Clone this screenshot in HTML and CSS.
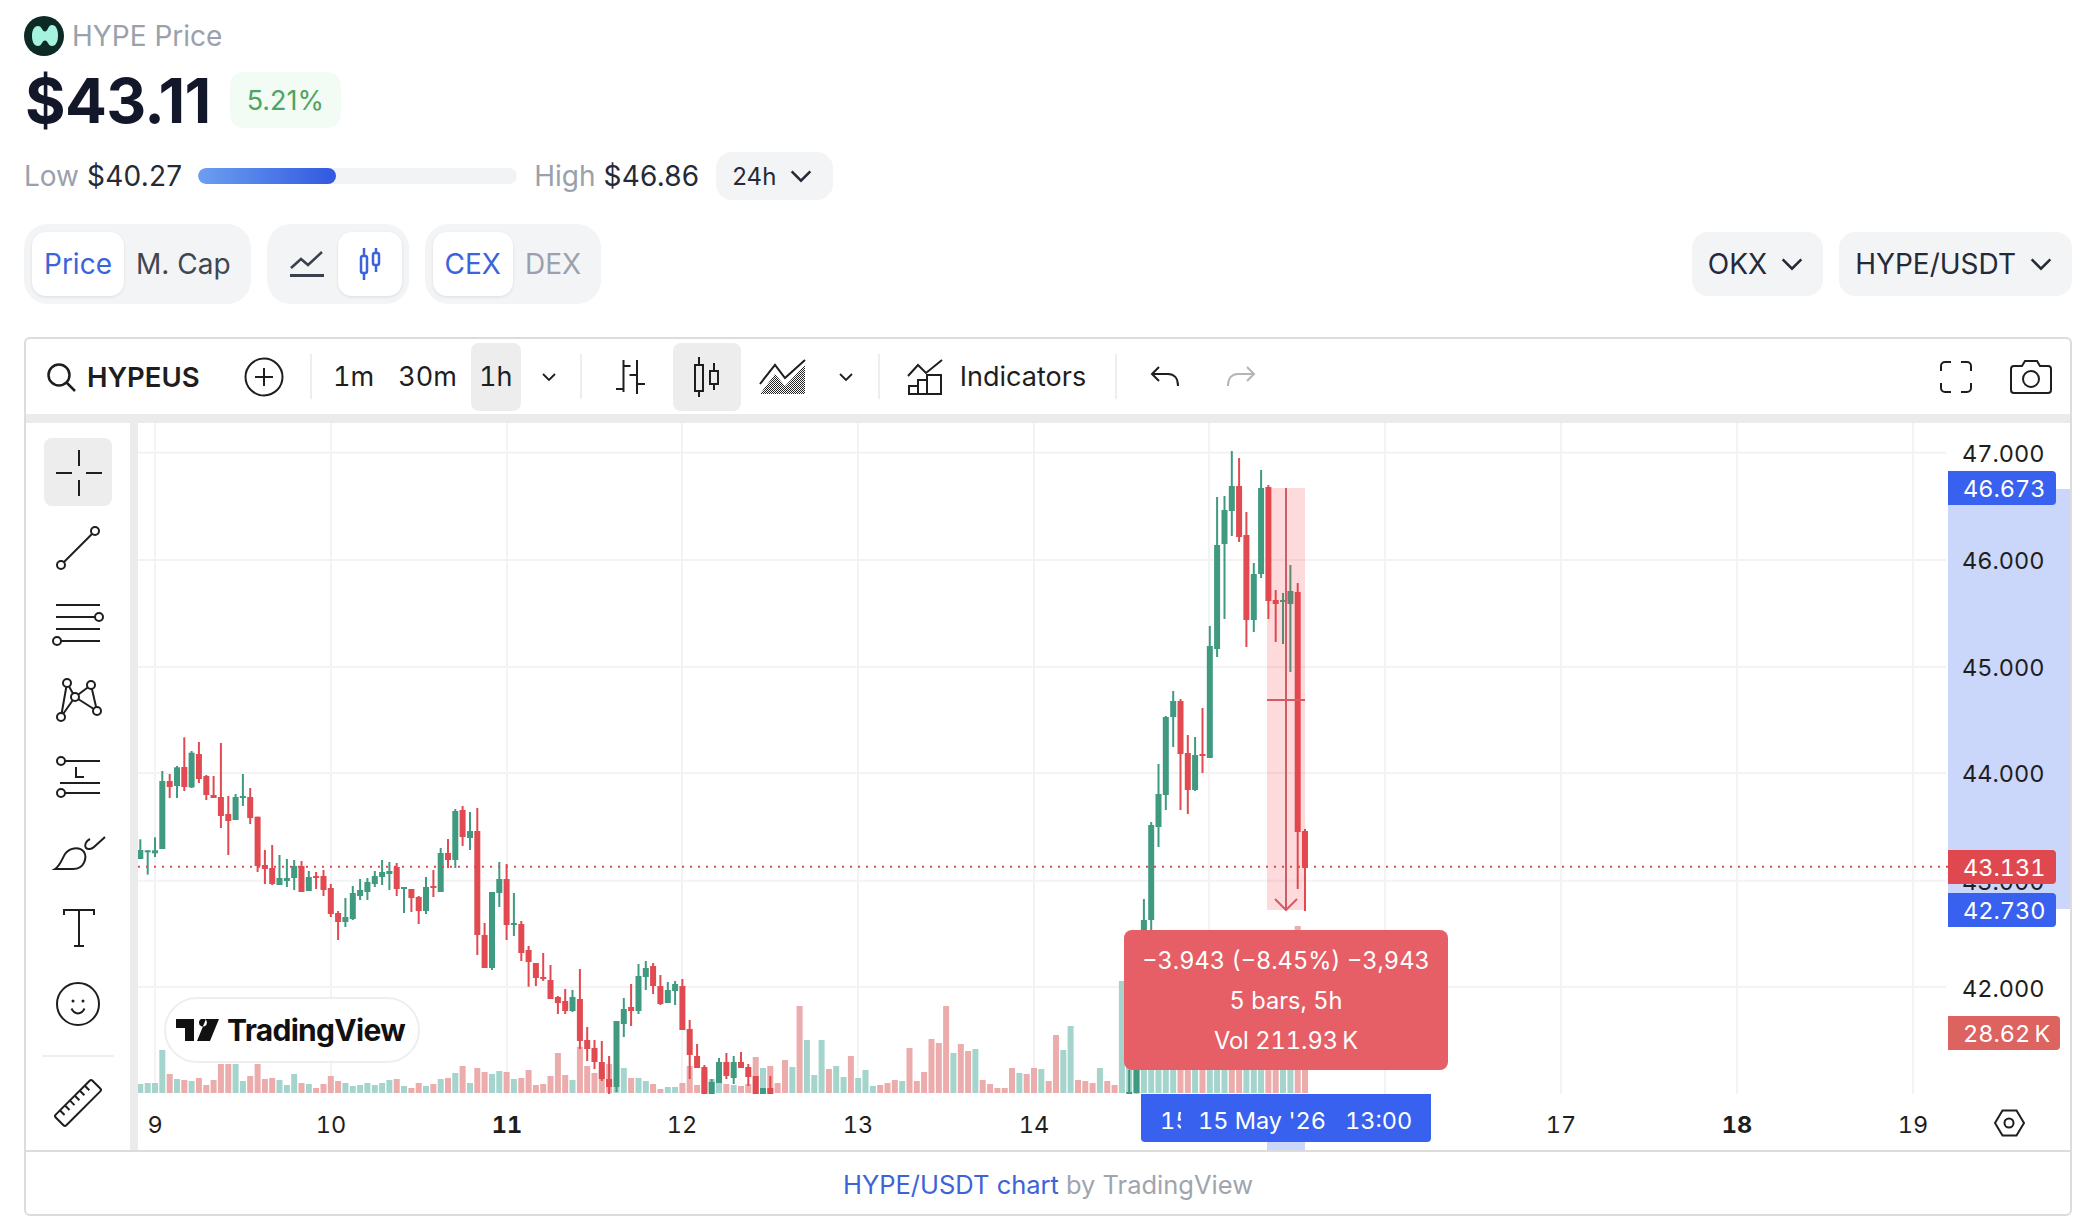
FILE: index.html
```html
<!DOCTYPE html>
<html lang="en">
<head>
<meta charset="utf-8">
<title>HYPE Price</title>
<link rel="stylesheet" href="styles.css">
</head>
<body>
<main class="page">
  <div class="title">
    <svg class="logo" viewBox="0 0 40 40"><circle cx="20" cy="20" r="20" fill="#0d2a25"/><path fill="#a5f3de" d="M8 20C8 13 11 10 14 10C18 10 18 15.500 21 15.500C24 15.500 24 9 28 9C32 9 34 14 34 19.500C34 25 32 30 28 30C24 30 24 24.500 21 24.500C18 24.500 18 30 14 30C11 30 8 27 8 20z"/></svg>
    <span>HYPE Price</span>
  </div>
  <div class="price-row">
    <span class="price">$43.11</span>
    <span class="badge">5.21%</span>
  </div>
  <div class="range-row">
    <span class="muted">Low</span><span class="val">$40.27</span>
    <div class="range-bar"><div class="range-fill"></div></div>
    <span class="muted">High</span><span class="val">$46.86</span>
    <button class="chip chip-sm">24h
      <svg class="chev" viewBox="0 0 20 12"><path d="M2 2l8 8 8-8"/></svg>
    </button>
  </div>
  <div class="controls">
    <div class="groups">
      <div class="seg">
        <span class="seg-item on">Price</span><span class="seg-item">M. Cap</span>
      </div>
      <div class="seg seg-icons">
        <span class="seg-icon">
          <svg width="34" height="28" viewBox="0 0 34 28" class="ic-dark"><path d="M1 18l10-9 7 6L32 2"/><path d="M0 25.500h34" stroke-width="3"/></svg>
        </span>
        <span class="seg-icon on">
          <svg width="24" height="32" viewBox="0 0 24 32" class="ic-blue"><path d="M6 0v8M6 25v7M18 0v5M18 17v7"/><rect x="3" y="8" width="6" height="17" rx="2"/><rect x="15" y="5" width="6" height="12" rx="2"/></svg>
        </span>
      </div>
      <div class="seg">
        <span class="seg-item on">CEX</span><span class="seg-item dim">DEX</span>
      </div>
    </div>
    <div class="selects">
      <button class="chip">OKX
        <svg class="chev" viewBox="0 0 20 12"><path d="M2 2l8 8 8-8"/></svg>
      </button>
      <button class="chip">HYPE/USDT
        <svg class="chev" viewBox="0 0 20 12"><path d="M2 2l8 8 8-8"/></svg>
      </button>
    </div>
  </div>

  <section class="chart">
    <div class="toolbar">
      <svg class="tb-search" width="30" height="30" viewBox="0 0 30 30"><circle cx="13" cy="13" r="10.500"/><path d="M20.500 20.500L29 29"/></svg>
      <strong class="symbol">HYPEUS</strong>
      <svg class="tb-plus" width="40" height="40" viewBox="0 0 40 40"><circle cx="20" cy="20" r="18.500"/><path d="M20 11v18M11 20h18"/></svg>
      <i class="tb-sep sep-a"></i>
      <span class="tf">1m</span>
      <span class="tf">30m</span>
      <span class="tf tf-on">1h</span>
      <svg class="tb-chev" viewBox="0 0 14 8"><path d="M1 1l6 6 6-6"/></svg>
      <i class="tb-sep sep-b"></i>
      <svg class="tb-bars" width="30" height="36" viewBox="0 0 30 36"><path d="M8.500 1v32M8.500 7h7M1 30h7.500M22 1v34M14.500 16h7.500M22 25h8"/></svg>
      <span class="tb-candle">
        <svg width="28" height="40" viewBox="0 0 28 40"><path d="M6 0v8M6 34v6M21 6v8M21 27v6"/><rect x="2" y="8" width="8" height="26"/><rect x="17" y="14" width="8" height="13"/></svg>
      </span>
      <svg class="tb-area" width="48" height="36" viewBox="0 0 48 36">
        <defs><pattern id="dots" width="2" height="2" patternUnits="userSpaceOnUse"><rect width="1" height="1" fill="#222" stroke="none"/><rect x="1" y="1" width="1" height="1" fill="#222" stroke="none"/></pattern></defs>
        <path fill="url(#dots)" stroke="none" d="M1 35L16 15l10 12L46 6v29z"/>
        <path d="M1 25L16 6l10 13L46 1" stroke-width="2"/>
      </svg>
      <svg class="tb-chev" viewBox="0 0 14 8"><path d="M1 1l6 6 6-6"/></svg>
      <i class="tb-sep sep-c"></i>
      <svg class="tb-ind" width="36" height="36" viewBox="0 0 36 36"><path d="M1 17L11 6l8 8L35 1"/><path d="M1 35h34M2 35V27h9v8M11 35V21h9v14M20 35V16h14v19"/></svg>
      <span class="ind-label">Indicators</span>
      <i class="tb-sep sep-d"></i>
      <svg class="tb-undo" width="30" height="22" viewBox="0 0 30 22"><path d="M9 1L2 8l7 7M2 8h16c6 0 10 4 10 12"/></svg>
      <svg class="tb-redo" width="30" height="22" viewBox="0 0 30 22"><path d="M21 1l7 7-7 7M28 8H12C6 8 2 12 2 20"/></svg>
      <span class="tb-spacer"></span>
      <svg class="tb-full" width="32" height="32" viewBox="0 0 32 32"><path d="M1 10V5a4 4 0 0 1 4-4h6M21 1h6a4 4 0 0 1 4 4v5M31 22v5a4 4 0 0 1-4 4h-6M11 31H5a4 4 0 0 1-4-4v-5"/></svg>
      <svg class="tb-cam" width="42" height="34" viewBox="0 0 42 34"><path d="M4 6h8l3-5h12l3 5h8a3 3 0 0 1 3 3v21a3 3 0 0 1-3 3H4a3 3 0 0 1-3-3V9a3 3 0 0 1 3-3z"/><circle cx="21" cy="19" r="8"/></svg>
    </div>
    <div class="chart-body">
      <nav class="tools">
        <button class="tool tool-on"><svg viewBox="0 0 68 68"><path d="M35 12v16M35 42v16M12 35h16M42 35h16"/></svg></button>
        <button class="tool"><svg viewBox="0 0 68 68"><path d="M20 48L48 20"/><circle cx="17" cy="51" r="4"/><circle cx="51" cy="17" r="4"/></svg></button>
        <button class="tool"><svg viewBox="0 0 68 68"><path d="M12 15h44M12 27h39M12 39h44M17 51h39"/><circle cx="55" cy="27" r="4"/><circle cx="13" cy="51" r="4"/></svg></button>
        <button class="tool"><svg viewBox="0 0 68 68"><path d="M23 17L17 51M23 17l8 14M31 31L17 51M31 31l16-12M31 31l22 14M47 19l6 26"/><circle cx="23" cy="17" r="4"/><circle cx="47" cy="19" r="4"/><circle cx="31" cy="31" r="4"/><circle cx="53" cy="45" r="4"/><circle cx="17" cy="51" r="4"/></svg></button>
        <button class="tool"><svg viewBox="0 0 68 68"><path d="M21 19h35M16 41h40M21 51h35M32 25v10h8"/><circle cx="17" cy="19" r="4"/><circle cx="17" cy="51" r="4"/></svg></button>
        <button class="tool"><svg viewBox="0 0 68 68"><path d="M11 51c5-3 7-10 10-15 4-6 14-8 19-2 3 5 1 17-11 17H11zM46 21c-4 2-6 6-4 9 2 2 6 1 8-1l11-10"/></svg></button>
        <button class="tool"><svg viewBox="0 0 68 68"><path d="M20 21v-5h30v5M35 16v36M30 52h10"/></svg></button>
        <button class="tool"><svg viewBox="0 0 68 68"><circle cx="34" cy="34" r="21"/><path d="M27.500 38.500c3 6.500 10 6.500 13 0"/><circle class="solid" cx="29" cy="31" r="1.500"/><circle class="solid" cx="39" cy="31" r="1.500"/></svg></button>
        <hr class="tools-sep">
        <button class="tool"><svg viewBox="0 0 68 68"><g transform="rotate(-45 34 34)"><rect x="8" y="26.500" width="52" height="15" rx="2"/><path d="M16 27v6M23 27v6M30 27v6M37 27v6M44 27v6M51 27v6"/></g></svg></button>
      </nav>
      <div class="pane">
        <svg id="plot" class="plot" width="1932" height="727" viewBox="138 423 1932 727"></svg>
        <div class="tv-pill">
          <svg width="43" height="22" viewBox="0 0 43 22"><path fill="#111" d="M0 0h18v22H9V9H0zM30 0h13l-9 22H21zM25 7a4 4 0 1 0 0-7 4 4 0 0 0 0 7z"/></svg>
          <span>TradingView</span>
        </div>
        <div class="tag tag-blue tag-top">46.673</div>
        <div class="tag tag-red tag-last">43.131</div>
        <div class="tag tag-blue tag-low">42.730</div>
        <div class="tag tag-vol">28.62&#8201;K</div>
        <div class="measure">
          <div>−3.943 (−8.45%) −3,943</div>
          <div>5 bars, 5h</div>
          <div>Vol 211.93&#8201;K</div>
        </div>
        <div class="time-tag"><span class="time-clip">15</span><span class="time-date">15 May '26</span><span>13:00</span></div>
      </div>
    </div>
  </section>
  <footer class="attrib"><a>HYPE/USDT chart</a> by TradingView</footer>
</main>
<script src="chart.js"></script>
</body>
</html>
```

FILE: styles.css
```css
* { box-sizing: border-box; }
html, body { margin: 0; background: #fff; }
body { font-family: Inter, "Liberation Sans", sans-serif; color: #1a1f2b; }
button { font: inherit; color: inherit; border: 0; background: none; padding: 0; }

.page { width: 2086px; height: 1230px; padding: 16px 14px 0 24px; }

.title { display: flex; align-items: center; gap: 8px; height: 40px; font-size: 28px; color: #9aa1ac; }
.logo { width: 40px; height: 40px; }

.price-row { display: flex; align-items: center; gap: 19px; margin-top: 16px; height: 56px; }
.price { font-size: 62px; font-weight: 700; letter-spacing: -.7px; color: #12182a; margin-left: 1px; }
.badge { display: flex; align-items: center; height: 56px; padding: 0 17px; border-radius: 14px; background: #f2fbf4; color: #4da560; font-size: 27px; }

.range-row { display: flex; align-items: center; height: 48px; margin-top: 24px; font-size: 28px; }
.muted { color: #9aa1ac; margin-right: 8px; }
.val { color: #252a36; letter-spacing: .2px; }
.range-bar { width: 319px; height: 16px; margin: 0 17px 0 16px; border-radius: 8px; background: #f1f3f5; overflow: hidden; }
.range-fill { width: 138px; height: 100%; border-radius: 8px; background: linear-gradient(90deg, #6d9ff0, #3158e0); }
.chip { display: flex; align-items: center; gap: 13px; height: 64px; padding: 0 19px 0 16px; border-radius: 16px; background: #f2f4f6; font-size: 28px; color: #252a36; }
.chip-sm { height: 48px; font-size: 24px; margin-left: 17px; padding-right: 20px; }
.chev { width: 24px; height: 14px; fill: none; stroke: #252a36; stroke-width: 2.2; }

.controls { display: flex; justify-content: space-between; align-items: center; height: 80px; margin-top: 24px; }
.groups { display: flex; gap: 16px; }
.selects { display: flex; gap: 16px; }
.seg { display: flex; height: 80px; padding: 8px; border-radius: 24px; background: #f2f4f6; font-size: 28px; }
.seg-item { display: flex; align-items: center; padding: 0 12px; border-radius: 14px; color: #40464f; }
.seg-item.on { background: #fff; color: #3b63dc; box-shadow: 0 1px 3px rgba(20,30,50,.1); }
.seg-item.dim { color: #9aa1ac; }
.seg-icons { gap: 14px; padding: 8px 7px 8px 23px; }
.seg-icon { display: flex; align-items: center; justify-content: center; width: 64px; border-radius: 14px; }
.seg-icons .seg-icon:first-child { width: 34px; }
.seg-icon.on { background: #fff; box-shadow: 0 1px 3px rgba(20,30,50,.1); }
.ic-dark { fill: none; stroke: #3a404d; stroke-width: 2.5; }
.ic-blue { fill: none; stroke: #3b63dc; stroke-width: 2.5; }

.chart { height: 815px; margin-top: 33px; border: 2px solid #dcdcdc; border-radius: 6px 6px 0 0; overflow: hidden; }
.toolbar { display: flex; align-items: center; height: 84px; padding: 0 18px 0 20px; border-bottom: 9px solid #ebebeb; font-size: 27px; color: #1e1e1e; font-variant-numeric: tabular-nums; }
.toolbar svg { fill: none; stroke: #1e1e1e; stroke-width: 2; flex: none; }
.toolbar .tb-search { stroke-width: 2.5; margin-right: 11px; }
.symbol { font-weight: 600; font-size: 27.5px; width: 113px; }
.tb-plus { margin-left: 44px; }
.tb-sep { width: 2px; height: 45px; background: #eeeeee; flex: none; }
.sep-a { margin: 0 20px 0 26px; }
.sep-b { margin: 0 33px 0 24px; }
.sep-c { margin: 0 27px 0 25px; }
.sep-d { margin: 0 33px 0 29px; }
.tf { display: flex; align-items: center; height: 68px; padding: 0 1px; margin-right: 22px; }
.tf-on { width: 50px; justify-content: center; background: #ededed; border-radius: 8px; margin-left: -9px; margin-right: 21px; }
.toolbar .tb-chev { width: 14px; height: 8px; stroke-width: 1.8; }
.tb-candle { display: flex; align-items: center; justify-content: center; width: 68px; height: 68px; margin: 0 18px 0 28px; border-radius: 8px; background: #ededed; }
.tb-area { margin-right: 32px; }
.ind-label { margin-left: 17px; white-space: nowrap; }
.toolbar .tb-redo { margin-left: 46px; stroke: #b4b4b4; }
.tb-spacer { flex: 1; }
.tb-full { margin-right: 38px; }

.chart-body { display: flex; height: 727px; }
.tools { flex: none; display: flex; flex-direction: column; gap: 8px; width: 112px; padding: 15px 0 0 18px; border-right: 8px solid #ebebeb; }
.tool { display: block; flex: none; width: 68px; height: 68px; border-radius: 8px; }
.tool svg { display: block; width: 68px; height: 68px; fill: none; stroke: #1e1e1e; stroke-width: 2; }
.tool circle { fill: #fff; }
.tool circle.solid { fill: #1e1e1e; stroke: none; }
.tool-on { background: #ededed; }
.tools-sep { width: 72px; height: 2px; margin: 9px 0 4px -2px; border: 0; background: #eeeeee; }

.pane { position: relative; flex: 1; overflow: hidden; font-variant-numeric: tabular-nums; }
.plot { display: block; font-family: Inter, "Liberation Sans", sans-serif; }
.grid { stroke: #f3f3f3; stroke-width: 2; }
.vol-up { fill: #a4d4cc; }
.vol-down { fill: #ecacac; }
.up { fill: #3f9a80; }
.down { fill: #e04a50; }
.last-line { stroke: #e0484f; stroke-width: 2; stroke-dasharray: 2 6; }
.sel-area { fill: rgba(242,54,69,.18); }
.sel-line { fill: none; stroke: #d25c65; stroke-width: 2; }
.axis-hl { fill: #cad7fb; }
.axis-text { font-size: 23.5px; fill: #1e1e1e; }
.axis-text.bold { font-weight: 700; }
.hex { fill: none; stroke: #1e1e1e; stroke-width: 2; }

.tv-pill { position: absolute; left: 26px; top: 574px; display: flex; align-items: center; gap: 8px; width: 256px; height: 66px; padding-left: 10px; border: 2px solid #eeeeee; border-radius: 33px; background: #fff; }
.tv-pill span { font-size: 30px; font-weight: 700; letter-spacing: -.7px; color: #111; }
.tag { position: absolute; left: 1810px; width: 108px; height: 34px; padding: 1px 0 0 15px; border-radius: 0 4px 4px 0; color: #fff; font-size: 23.5px; line-height: 34px; white-space: nowrap; }
.tag-blue { background: #3861ef; }
.tag-red { background: #e0484f; }
.tag-top { top: 48px; }
.tag-last { top: 427px; }
.tag-low { top: 470px; }
.tag-vol { top: 593px; width: 112px; background: #dd6360; }
.measure { position: absolute; left: 986px; top: 507px; display: flex; flex-direction: column; justify-content: center; width: 324px; height: 140px; padding-top: 2px; border-radius: 8px; background: #e65f66; color: #fff; font-size: 23.6px; line-height: 40px; text-align: center; }
.time-tag { position: absolute; left: 1003px; top: 671px; display: flex; align-items: center; width: 290px; height: 48px; padding: 5px 0 0 19px; border-radius: 0 0 4px 4px; background: #3861ef; color: #fff; font-size: 23.5px; white-space: nowrap; }
.time-clip { width: 21px; overflow: hidden; margin-right: 17px; }
.time-date { margin-right: 19px; }

.attrib { display: flex; justify-content: center; align-items: center; gap: 7px; height: 64px; padding-top: 2px; border: 2px solid #dcdcdc; border-top: 0; border-radius: 0 0 6px 6px; color: #a0a5ad; font-size: 25.5px; }
.attrib a { color: #3d63d8; }
```

FILE: chart.js
```js
// Pixel-space series read off the chart: [colour, wickTop, bodyTop, bodyBottom, wickBottom]
// in units of 1/3 px, relative to a base y for each segment.
var g = 'up', r = 'down';
var segments = [
  { from: 0, base: 710, rows: [
    [g,388,420,447,447],[g,421,421,425,494],[g,382,421,430,441],[g,183,213,417,417],[r,192,213,231,264],
    [g,168,172,228,264],[r,82,171,231,243],[g,123,128,232,234],[r,96,132,207,219],[r,195,198,255,270],
    [r,198,255,264,264],[r,99,261,318,354],[r,258,312,333,435],[g,252,261,330,330],[g,192,258,264,288],
    [r,234,261,324,342],[r,320,320,468,486],[r,420,465,477,522],[r,405,474,522,525],[g,435,504,525,525],
    [g,447,504,513,531],[g,450,468,504,540],[r,453,468,546,546],[g,483,501,543,543],[r,486,498,504,537],
    [r,480,498,540,558],[r,522,534,612,621],[r,603,609,636,690],[g,564,621,636,651],[g,528,549,627,630],
    [g,507,540,558,570],[g,504,516,546,570],[g,483,498,522,531],[g,450,486,501,525],[g,456,483,492,540],
    [r,459,471,537,558],[g,531,531,537,609],[r,537,537,564,606],[r,558,561,603,642],[g,501,531,603,612],
    [r,480,528,534,561],[g,414,429,546,546],[r,387,429,450,474],[g,297,303,450,474],[r,288,300,381,408],
    [g,306,363,384,420],[r,294,363,675,735],[r,639,675,774,774],[g,546,546,774,780],[g,456,507,549,591],
    [r,462,507,645,690],[g,549,639,645,678],[r,633,642,729,753],[r,708,720,756,830]
  ]},
  { from: 54, base: 780, rows: [
    [r,549,549,594,618],[r,519,591,597,603],[r,555,600,657,657],[r,648,651,669,702],[r,627,663,693,702],
    [g,630,651,693,696],[r,567,657,783,807],[r,741,780,807,843],[r,780,804,846,867],[r,783,846,897,903],
    [r,828,897,921,942],[g,723,723,921,936],[g,654,687,732,771],[r,612,681,693,738],[g,552,588,693,702],
    [g,543,564,591,630],[r,549,558,618,642],[r,585,618,672,675],[g,606,630,669,669],[g,603,612,633,675],
    [r,597,618,750,750],[r,720,747,825,897],[r,792,828,864,864],[r,855,861,942,942],[g,897,906,942,942],
    [g,834,846,909,909],[r,819,846,888,897],[g,828,846,894,912],[r,816,846,864,864],[r,852,861,891,918],
    [r,888,888,942,942],[g,924,924,942,942],[r,888,924,942,942]
  ]},
  { from: 135, base: 880, rows: [[g,570,636,640,640],[g,570,570,640,640]] },
  { from: 137, base: 430, rows: [
    [g,1407,1470,1700,1800],[g,1176,1185,1470,1500],[g,1002,1092,1191,1251],[g,858,861,1095,1140],[g,783,813,861,951],
    [r,807,813,972,1140],[r,915,969,1080,1152],[g,921,975,1080,1083],[r,834,972,978,1029],[g,588,648,984,984],
    [g,201,345,657,681],[g,198,240,342,567],[g,63,168,243,318],[r,84,168,321,336],[r,246,315,570,651],
    [g,399,432,570,606],[g,120,174,432,444],[r,165,171,513,567],[r,480,510,522,636],[g,489,510,516,642],
    [g,405,483,522,726],[r,459,486,1206,1377],[r,1197,1203,1314,1443]
  ]}
];
// Volume tops, same 1/3 px units.
var volumes = [
  { from: 0, base: 710, rows: [
    [g,1122],[g,1119],[g,1119],[g,1020],[r,1092],[g,1107],[r,1110],[g,1113],[r,1104],[r,1125],[r,1110],[r,1062],
    [r,1062],[g,1062],[g,1113],[r,1098],[r,1062],[r,1107],[r,1104],[g,1110],[g,1125],[g,1092],[r,1119],[g,1122],
    [r,1134],[r,1122],[r,1098],[r,1113],[g,1119],[g,1128],[g,1125],[g,1119],[g,1125],[g,1119],[g,1110],[r,1107],
    [g,1128],[r,1134],[r,1119],[g,1128],[r,1122],[g,1107],[r,1104],[g,1089],[r,1068],[g,1119],[r,1074],[r,1086],
    [g,1092],[g,1083],[r,1086],[g,1107],[r,1104],[r,1080]
  ]},
  { from: 54, base: 780, rows: [
    [r,915],[r,912],[r,888],[r,819],[r,885],[g,900],[r,800],[r,858],[r,879],[r,870],[r,852],[g,920],[g,864],[r,894],
    [g,894],[g,903],[r,912],[r,927],[g,921],[g,921],[r,909],[r,858],[r,915],[r,870],[g,897],[g,909],[r,912],[g,915],
    [r,918],[r,912],[r,831],[g,864],[r,858],[r,909],[r,840],[g,861],[r,678],[g,780],[g,885],[g,780],[r,867],[g,858],
    [g,891],[r,828],[g,894],[g,870],[g,918],[r,915],[r,909],[r,900],[g,903],[r,804],[r,903],[r,876],[r,777],[r,789],
    [r,678],[g,819],[r,792],[r,813],[g,807],[r,900],[r,912],[r,924],[r,924],[r,864],[g,879],[r,882],[r,864],[g,867],
    [r,903],[r,765],[g,810],[g,738],[r,900],[r,903],[r,909],[g,864],[r,903],[r,915]
  ]},
  { from: 134, base: 880, rows: [
    [g,303],[g,420],[g,420],[g,420],[g,420],[g,420],[g,420],[g,420],[r,420],[r,420],[g,420],[r,420],[g,420],
    [g,420],[g,420],[r,420],[r,420],[g,420],[g,420],[g,420],[r,420],[r,420],[g,420],[g,420],[r,138],[r,420]
  ]}
];

var out = [];
var X0 = 140.35, STEP = 7.325, BASE = 1093, CLIP = 1094;
function xOf(i) { return X0 + STEP * i; }
function rect(cls, x, y, w, h) {
  if (h <= 0) return;
  out.push('<rect class="' + cls + '" x="' + x.toFixed(1) + '" y="' + y.toFixed(1) + '" width="' + w + '" height="' + h.toFixed(1) + '"/>');
}
function line(cls, x1, y1, x2, y2) {
  out.push('<line class="' + cls + '" x1="' + x1 + '" y1="' + y1 + '" x2="' + x2 + '" y2="' + y2 + '"/>');
}
function text(cls, x, y, anchor, s) {
  out.push('<text class="' + cls + '" x="' + x + '" y="' + y + '" text-anchor="' + anchor + '">' + s + '</text>');
}

// grid
[155, 331, 507, 682, 858, 1034, 1209, 1385, 1561, 1737, 1913].forEach(function (x) { line('grid', x, 423, x, CLIP); });
[452.7, 560, 667, 773, 880.7, 987].forEach(function (y) { line('grid', 138, y, 1946, y); });

// volume
volumes.forEach(function (s) {
  s.rows.forEach(function (v, k) {
    var top = s.base + v[1] / 3;
    rect(v[0] === g ? 'vol-up' : 'vol-down', xOf(s.from + k) - 3, top, 6, BASE - top);
  });
});

// candles, clipped at the bottom of the price pane
segments.forEach(function (s) {
  s.rows.forEach(function (c, k) {
    var x = xOf(s.from + k), cy = function (v) { return Math.min(s.base + v / 3, CLIP); };
    rect(c[0], x - 1, cy(c[1]), 2, cy(c[4]) - cy(c[1]));
    rect(c[0], x - 3, cy(c[2]), 6, Math.max(cy(c[3]) - cy(c[2]), 2));
  });
});

line('last-line', 138, 866.7, 1948, 866.7);

// measure selection
rect('sel-area', 1267, 488, 38, 422);
line('sel-line', 1267, 700, 1305, 700);
line('sel-line', 1286, 488, 1286, 910);
out.push('<path class="sel-line" d="M1275 899l11 11 11-11"/>');

// axes
rect('axis-hl', 1948, 489, 122, 420);
rect('axis-hl', 1267, 1142, 38, 8);
[['47.000', 453], ['46.000', 560], ['45.000', 667], ['44.000', 773], ['43.000', 881], ['42.000', 988]].forEach(function (p) {
  text('axis-text', 1962, p[1] + 9, 'start', p[0]);
});
[['9', 155], ['10', 331], ['11', 507, 1], ['12', 682], ['13', 858], ['14', 1034], ['17', 1561], ['18', 1737, 1], ['19', 1913]].forEach(function (d) {
  text('axis-text' + (d[2] ? ' bold' : ''), d[1], 1133, 'middle', d[0]);
});
out.push('<path class="hex" d="M1995 1123l7.500-12.500h14l7.500 12.500-7.500 12.500h-14z"/><circle class="hex" cx="2009" cy="1123" r="4.500"/>');

document.getElementById('plot').innerHTML = out.join('');
```
